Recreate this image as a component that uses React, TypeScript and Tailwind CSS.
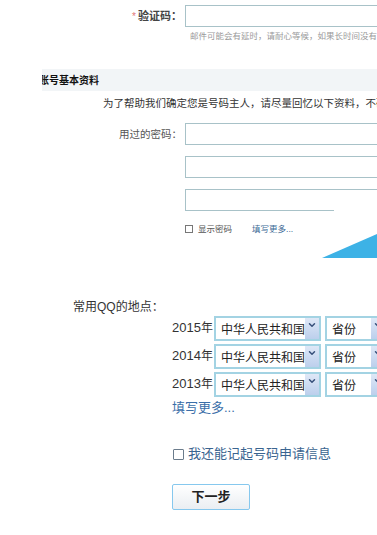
import { ChevronDown } from "lucide-react";

// 下拉框（旧式 IE 风格）
const OldSelect = ({ text, width }: { text: string; width: string }) => {
  return (
    <div
      className={`flex h-[25px] ${width} shrink-0 items-stretch border-2 border-[#a3d3e3] bg-white`}
    >
      <div className="flex flex-1 items-center pl-[5px] pt-[3px] text-[12px] text-[#222] whitespace-nowrap overflow-hidden">
        {text}
      </div>
      <div className="flex w-[14px] shrink-0 items-start justify-center bg-gradient-to-b from-[#dfe8f7] to-[#bccfec] pt-[2px]">
        <ChevronDown size={10} strokeWidth={3.5} className="text-[#37507a]" />
      </div>
    </div>
  );
};

const YearRow = ({ year }: { year: string }) => {
  return (
    <div className="flex items-center">
      <div className="w-[42px] shrink-0 text-[13px] text-[#333] leading-none pb-[3px] whitespace-nowrap">
        {year}
        <span className="text-[12px]">年</span>
      </div>
      <OldSelect text="中华人民共和国" width="w-[107px]" />
      <div className="w-[4px] shrink-0" />
      <OldSelect text="省份" width="w-[62px]" />
    </div>
  );
};

const App = () => {
  const font = { fontFamily: '"Liberation Sans", "Noto Sans CJK SC", sans-serif' };

  return (
    <div className="w-[377px] h-[535px] overflow-hidden bg-white" style={font}>
      {/* 验证码 */}
      <div className="flex items-center h-[22px] mt-[5px]">
        <div className="w-[185px] shrink-0 text-right pr-[3px] text-[11px] font-bold text-[#444] whitespace-nowrap">
          <span className="text-[#e27777] font-normal text-[10px] mr-[2px]">*</span>
          验证码：
        </div>
        <div className="w-[220px] h-[22px] shrink-0 border border-[#a8c2c8]" />
      </div>
      <div className="pl-[190px] mt-[3px] text-[8.5px] leading-[12px] text-[#9a9a9a] whitespace-nowrap">
        邮件可能会有延时，请耐心等候，如果长时间没有收到
      </div>

      {/* 账号基本资料 */}
      <div className="ml-[42px] mt-[27px] h-[22px] bg-[#f2f5f7] flex items-center overflow-hidden">
        <span className="-ml-[3px] text-[10px] font-bold text-[#111] whitespace-nowrap">账号基本资料</span>
      </div>
      <div className="pl-[103px] mt-[5px] text-[10.5px] leading-[14px] text-[#333] whitespace-nowrap">
        为了帮助我们确定您是号码主人，请尽量回忆以下资料，不确定的可以不填
      </div>

      {/* 用过的密码 */}
      <div className="flex mt-[13px]">
        <div className="w-[185px] shrink-0 text-right pr-[3px] pt-[4px] text-[10.5px] text-[#555] whitespace-nowrap">
          用过的密码：
        </div>
        <div className="flex flex-col gap-[11px]">
          <div className="w-[220px] h-[22px] border border-[#a8c2c8]" />
          <div className="w-[220px] h-[22px] border border-[#a8c2c8]" />
          <div className="relative w-[220px] h-[22px] border-l border-t border-[#a8c2c8]">
            <div className="absolute left-0 bottom-0 w-[148px] h-px bg-[#a8c2c8]" />
          </div>
        </div>
      </div>
      <div className="flex items-center pl-[185px] mt-[13px] h-[10px] text-[8.5px] whitespace-nowrap">
        <div className="w-[8px] h-[8px] border border-[#777] shrink-0" />
        <span className="ml-[5px] text-[#555]">显示密码</span>
        <span className="ml-[20px] text-[#3d6a96]">填写更多...</span>
      </div>
      <div className="flex justify-end mt-[0px]">
        <svg width="55" height="24" viewBox="0 0 55 24" className="block">
          <polygon points="0,24 55,0 55,24" fill="#3db2e6" />
        </svg>
      </div>

      {/* 常用QQ的地点 */}
      <div className="pl-[73px] mt-[41px] text-[12px] leading-[16px] text-[#333] whitespace-nowrap">
        常用QQ的地点：
      </div>
      <div className="pl-[172px] mt-[1px] flex flex-col gap-[3px]">
        <YearRow year="2015" />
        <YearRow year="2014" />
        <YearRow year="2013" />
      </div>
      <div className="pl-[172px] mt-[3px] text-[13px] leading-[16px] text-[#3a6ea8] whitespace-nowrap">
        填写更多...
      </div>

      {/* 申请信息 */}
      <div className="flex items-center pl-[173px] mt-[30px] whitespace-nowrap">
        <div className="w-[11px] h-[11px] border border-[#6b7c8c] rounded-[1px] shrink-0" />
        <span className="ml-[4px] text-[13px] leading-[16px] text-[#3a6490]">我还能记起号码申请信息</span>
      </div>
      <div className="pl-[172px] mt-[22px]">
        <button className="w-[78px] h-[26px] rounded-[2px] border border-[#86c8ee] bg-gradient-to-b from-white to-[#eaeef2] text-[13px] font-bold text-[#222]">
          下一步
        </button>
      </div>
    </div>
  );
};
export default App;
